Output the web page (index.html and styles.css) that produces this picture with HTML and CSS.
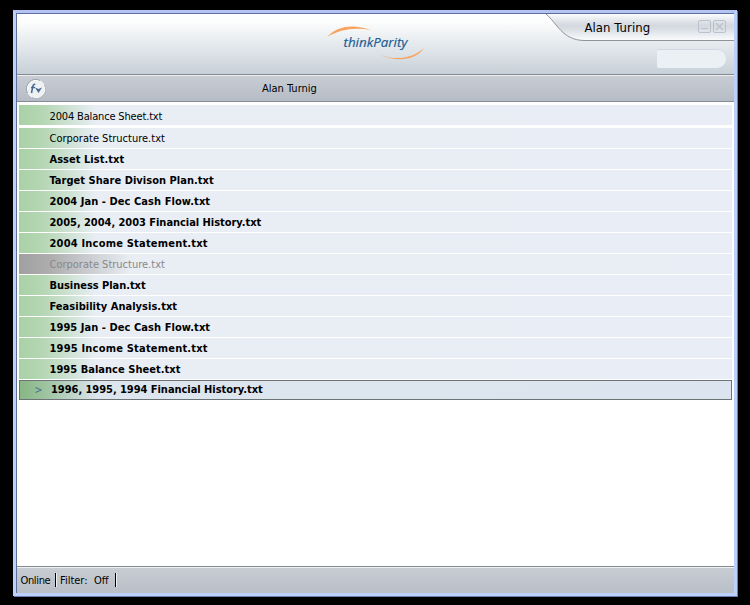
FILE: styles.css
```
* { box-sizing: border-box; }

body {
  margin: 0;
  padding: 10px 13px 9px 13px;
  height: 605px;
  overflow: hidden;
  background: #000;
  color: #000;
  font: 11px "DejaVu Sans Condensed", "DejaVu Sans", sans-serif;
  font-stretch: condensed;
}

.window {
  display: flex;
  flex-direction: column;
  height: 586px;
  padding: 1px 0 0 1px;
  border: 3px solid #bdcffb;
  border-top-color: #b3c4f2;
  background: #5f6f9c;
  box-shadow: 1px 1px #6c7caf;
}

.header {
  position: relative;
  flex: none;
  height: 61px;
  border-bottom: 1px solid #858a90;
  background: linear-gradient(#fff, #fbfcfc 15%, #c7d0d8);
}

.logo {
  position: absolute;
  left: 309px;
  top: 11px;
}

.logo-text {
  font: italic 13.5px "Open Sans", sans-serif;
  fill: #1b5c94;
  stroke: #1b5c94;
  stroke-width: .2px;
}

.account {
  position: absolute;
  right: 0;
  top: 0;
  width: 188px;
  height: 28px;
}

.tab-shape { display: block; }

.user {
  position: absolute;
  left: 38.5px;
  top: 6px;
  font-size: 13px;
  line-height: 16px;
  letter-spacing: .06px;
}

.controls {
  position: absolute;
  left: 152px;
  top: 6px;
}

.search {
  position: absolute;
  right: 8px;
  top: 35px;
  width: 69px;
  height: 19px;
  border-top: 1px solid #d0d9e2;
  border-radius: 2px 9px 9px 2px;
  background: #ebf0f4;
}

.toolbar {
  display: flex;
  align-items: center;
  flex: none;
  height: 27px;
  padding-left: 9px;
  border-top: 1px solid #eceef0;
  border-bottom: 1px solid #878b91;
  background: linear-gradient(#c8cdd4, #b6bcc5);
}

.title { margin-left: 216px; }

.list {
  flex: 1;
  padding: 3px 2px 0;
  background: #fff;
}

.row {
  height: 20px;
  margin-bottom: 1px;
  padding-left: 30.5px;
  line-height: 22px;
  white-space: nowrap;
  background: linear-gradient(90deg, #a9d1a6, #b6d7b5 25px, #e9eef5 78px, #e9edf5);
}

.first {
  margin-bottom: 3px;
  line-height: 23px;
  letter-spacing: -.16px;
}

.bold { font-weight: bold; letter-spacing: .03px; }
.tight { letter-spacing: -.04px; }
.wide { letter-spacing: .06px; }
.wider { letter-spacing: .2px; }

.closed {
  color: #888;
  background: linear-gradient(90deg, #a0a0a0, #adadad 30px, #e9eef4 112px, #e9edf5);
}

.selected {
  display: flex;
  align-items: center;
  padding-left: 15px;
  border: 1px solid #6b7377;
  line-height: 20px;
  background: linear-gradient(90deg, #87b684, #9dc39f 25px, #dde5ee 78px, #dce5ef);
}

.arrow { margin-right: 9px; }

.status {
  display: flex;
  align-items: center;
  flex: none;
  height: 27px;
  padding-left: 3.5px;
  border-top: 1px solid #858a90;
  box-shadow: inset 0 1px #f0f1f3;
  background: linear-gradient(#c8cdd4, #b9bfc7);
}

.online, .off {
  height: 14px;
  border-right: 1px solid #000;
  box-shadow: 1px 0 #eef0f2;
  line-height: 15px;
}

.online {
  width: 35.5px;
  letter-spacing: -.35px;
}

.filter {
  width: 34px;
  margin-left: 4px;
}

.off { width: 22px; }
```

FILE: index.html
```
<!DOCTYPE html>
<html lang="en">
<head>
<meta charset="utf-8">
<title>thinkParity</title>
<link rel="stylesheet" href="styles.css">
</head>
<body>
<main class="window">
  <header class="header">
    <svg class="logo" width="100" height="40" viewBox="0 0 100 40">
      <path d="M1 12C12 0 28-1 45 5C29 2 14 4 1 12Z" fill="#f8a45e"/>
      <path d="M54 30C70 36 88 33 98 23C89 37 68 36 54 30Z" fill="#f8a45e"/>
      <text class="logo-text" x="17.5" y="21.5" textLength="64" lengthAdjust="spacingAndGlyphs">thinkParity</text>
    </svg>
    <div class="account">
      <svg class="tab-shape" width="188" height="28" viewBox="0 0 188 28">
        <defs>
          <linearGradient id="tab" x1="0" y1="0" x2="0" y2="1">
            <stop offset="0" stop-color="#fafbfc"/>
            <stop offset=".42" stop-color="#d4d9e0"/>
            <stop offset=".55" stop-color="#d8dde3"/>
            <stop offset="1" stop-color="#fbfcfd"/>
          </linearGradient>
        </defs>
        <path d="M0 0C11 9 16 26 38 26.5H188V0Z" fill="url(#tab)"/>
        <path d="M0 0C11 9 16 26 38 26.5H188" fill="none" stroke="#90949a"/>
      </svg>
      <span class="user">Alan Turing</span>
      <svg class="controls" width="28" height="13" viewBox="0 0 28 13" fill="none" stroke="#b7c2ce">
        <rect x=".5" y=".5" width="12" height="12" rx="1.5"/>
        <path d="M3 8.5H10"/>
        <rect x="15.5" y=".5" width="12" height="12" rx="1.5"/>
        <path d="M18 3L25 10M25 3L18 10" stroke-width="1.3"/>
      </svg>
    </div>
    <div class="search"></div>
  </header>
  <div class="toolbar">
    <svg class="badge" width="20" height="20" viewBox="0 0 20 20">
      <circle cx="10" cy="10" r="9" fill="#edf1f4" stroke="#fff"/>
      <path d="M1.5 14A9.3 9.3 0 0 1 14 1.5" fill="none" stroke="#9ba1a9"/>
      <path d="M18.5 6A9.3 9.3 0 0 1 6 18.5" fill="none" stroke="#b0b6bd"/>
      <path d="M9.3 5.5C7.8 5 7 6 6.8 7.5L5.5 14M5 8.5H9" fill="none" stroke="#47678c" stroke-width="1.5"/>
      <path d="M9 8.5L12.5 10L16 8.5L12.5 14Z" fill="#47678c"/>
    </svg>
    <span class="title">Alan Turnig</span>
  </div>
  <section class="list">
    <div class="row first">2004 Balance Sheet.txt</div>
    <div class="row">Corporate Structure.txt</div>
    <div class="row bold">Asset List.txt</div>
    <div class="row bold">Target Share Divison Plan.txt</div>
    <div class="row bold wide">2004 Jan - Dec Cash Flow.txt</div>
    <div class="row bold tight">2005, 2004, 2003 Financial History.txt</div>
    <div class="row bold wider">2004 Income Statement.txt</div>
    <div class="row closed">Corporate Structure.txt</div>
    <div class="row bold tight">Business Plan.txt</div>
    <div class="row bold">Feasibility Analysis.txt</div>
    <div class="row bold wide">1995 Jan - Dec Cash Flow.txt</div>
    <div class="row bold wider">1995 Income Statement.txt</div>
    <div class="row bold">1995 Balance Sheet.txt</div>
    <div class="row bold tight selected"><svg class="arrow" width="7" height="6" viewBox="0 0 7 6"><path d="M.5 .5L6 3L.5 5.5" fill="none" stroke="#527d92" stroke-width="1.2"/></svg>1996, 1995, 1994 Financial History.txt</div>
  </section>
  <footer class="status">
    <span class="online">Online</span><span class="filter">Filter:</span><span class="off">Off</span>
  </footer>
</main>
</body>
</html>
```
